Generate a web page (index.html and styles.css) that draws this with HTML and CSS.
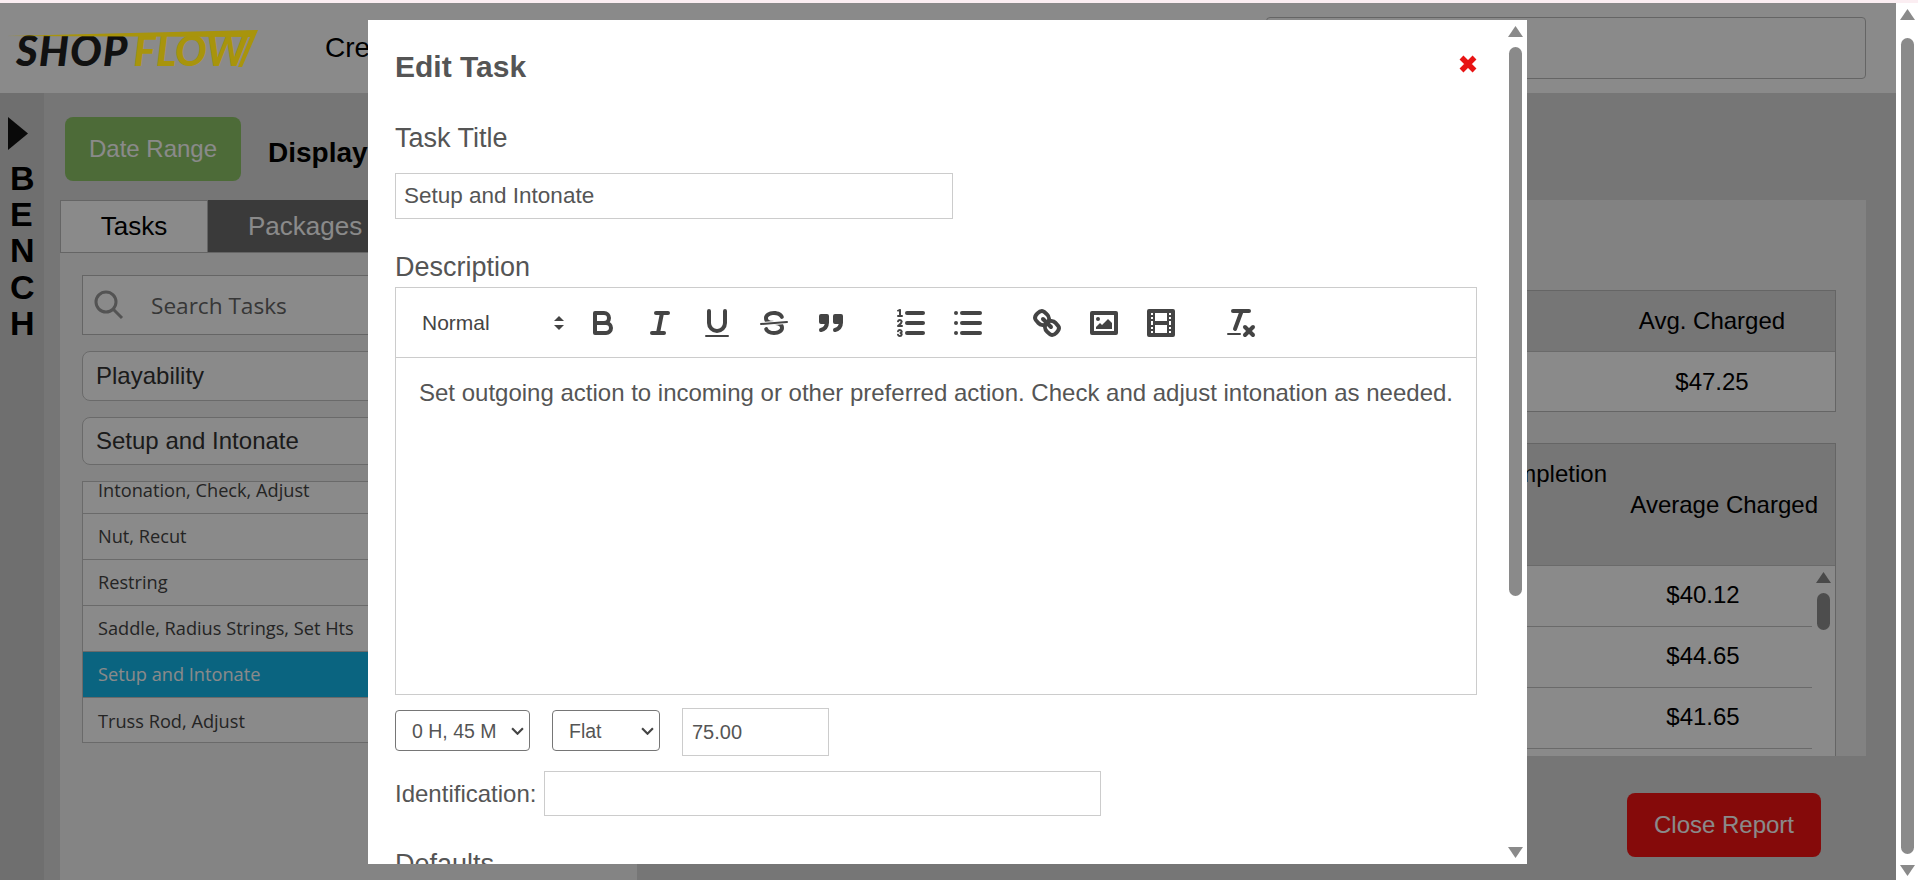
FILE: index.html
```html
<!DOCTYPE html>
<html lang="en">
<head>
<meta charset="utf-8">
<title>Shopflow</title>
<link rel="stylesheet" href="styles.css">
</head>
<body>
<div class="top-strip"></div>
<div class="shell">
  <div class="page">
    <header class="header">
      <div class="logo">
        <svg class="logo-swoosh" viewBox="0 0 260 50" aria-hidden="true"><polygon points="7,16 258,10 242,47 238,47 250,17"/></svg>
        <span class="logo-shop">SHOP</span><span class="logo-flow">FLOW</span>
      </div>
      <div class="header-title">Create Report</div>
      <div class="header-box"></div>
    </header>
    <div class="main">
      <aside class="bench">
        <svg class="bench-arrow" viewBox="0 0 20 33" aria-hidden="true"><polygon points="0,0 20,16.5 0,33"/></svg>
        <div class="bench-letters"><span>B</span><span>E</span><span>N</span><span>C</span><span>H</span></div>
      </aside>
      <div class="content">
        <div class="toolbar-row">
          <button class="date-btn">Date Range</button>
          <div class="display-label">Display</div>
        </div>
        <div class="panels">
          <section class="left-panel">
            <div class="tabs">
              <div class="tab tab-active">Tasks</div>
              <div class="tab tab-dark">Packages</div>
            </div>
            <div class="left-body">
              <div class="search">
                <svg class="search-icon" viewBox="0 0 30 30" aria-hidden="true"><circle cx="12" cy="12" r="10"/><line x1="19.5" y1="19.5" x2="28" y2="28"/></svg>
                <span class="search-text">Search Tasks</span>
              </div>
              <div class="group">Playability</div>
              <div class="group">Setup and Intonate</div>
              <div class="task-list">
                <div class="task task-first">Intonation, Check, Adjust</div>
                <div class="task">Nut, Recut</div>
                <div class="task">Restring</div>
                <div class="task">Saddle, Radius Strings, Set Hts</div>
                <div class="task task-selected">Setup and Intonate</div>
                <div class="task">Truss Rod, Adjust</div>
              </div>
            </div>
          </section>
          <div class="right-col">
            <section class="right-panel">
              <div class="table table-one">
                <div class="thead thead-one"><span class="col-avg">Avg. Charged</span></div>
                <div class="trow trow-one"><span class="col-avg">$47.25</span></div>
              </div>
              <div class="table table-two">
                <div class="thead thead-two">
                  <span class="col-completion">Completion</span>
                  <span class="col-average">Average Charged</span>
                </div>
                <div class="tbody">
                  <div class="rows">
                    <div class="row"><span class="col-money">$40.12</span></div>
                    <div class="row"><span class="col-money">$44.65</span></div>
                    <div class="row"><span class="col-money">$41.65</span></div>
                  </div>
                  <div class="mini-scroll">
                    <svg class="arrow-up" viewBox="0 0 15 11" aria-hidden="true"><polygon points="7.5,0 15,11 0,11"/></svg>
                    <div class="mini-thumb"></div>
                  </div>
                </div>
              </div>
            </section>
            <div class="close-row"><button class="close-btn">Close Report</button></div>
          </div>
        </div>
      </div>
    </div>
    <div class="overlay"></div>
    <div class="modal">
      <div class="modal-body">
        <div class="modal-head">
          <h2 class="modal-title">Edit Task</h2>
          <svg class="modal-x" viewBox="0 0 18 18" aria-hidden="true"><path d="M2.5 2.5 15.500 15.500M15.500 2.500 2.500 15.500"/></svg>
        </div>
        <label class="field-label">Task Title</label>
        <input class="text-input title-input" type="text" value="Setup and Intonate">
        <label class="field-label desc-label">Description</label>
        <div class="editor">
          <div class="ql-toolbar">
            <div class="picker"><span>Normal</span>
              <svg class="picker-arrows" viewBox="0 0 10 14" aria-hidden="true"><polygon points="5,0 10,5 0,5"/><polygon points="5,14 10,9 0,9"/></svg>
            </div>
            <div class="ql-group">
              <span class="ql-btn"><svg viewBox="0 0 18 18"><path class="s" d="M5,4H9.5A2.5,2.5,0,0,1,12,6.5v0A2.5,2.5,0,0,1,9.5,9H5A0,0,0,0,1,5,9V4A0,0,0,0,1,5,4Z"/><path class="s" d="M5,9h5.5A2.5,2.5,0,0,1,13,11.5v0A2.5,2.5,0,0,1,10.5,14H5a0,0,0,0,1,0,0V9A0,0,0,0,1,5,9Z"/></svg></span>
              <span class="ql-btn"><svg viewBox="0 0 18 18"><line class="s" x1="7" x2="13" y1="4" y2="4"/><line class="s" x1="5" x2="11" y1="14" y2="14"/><line class="s" x1="8" x2="10" y1="14" y2="4"/></svg></span>
              <span class="ql-btn"><svg viewBox="0 0 18 18"><path class="s" d="M5,3V9a4.012,4.012,0,0,0,4,4H9a4.012,4.012,0,0,0,4-4V3"/><rect class="f" height="1" rx="0.5" ry="0.5" width="12" x="3" y="15"/></svg></span>
              <span class="ql-btn"><svg viewBox="0 0 18 18"><line class="s thin" x1="15.5" x2="2.5" y1="8.5" y2="9.5"/><path class="f" d="M9.007,8C6.542,7.791,6,7.519,6,6.5,6,5.792,7.283,5,9,5c1.571,0,2.765.679,2.969,1.309a1,1,0,0,0,1.9-.617C13.356,4.106,11.354,3,9,3,6.2,3,4,4.538,4,6.5a3.2,3.2,0,0,0,.5,1.843Z"/><path class="f" d="M8.984,10C11.457,10.208,12,10.479,12,11.5c0,.708-1.283,1.5-3,1.5-1.571,0-2.765-.679-2.969-1.309a1,1,0,0,0-1.9.617C4.644,13.894,6.646,15,9,15c2.8,0,5-1.538,5-3.5a3.2,3.2,0,0,0-.5-1.843Z"/></svg></span>
              <span class="ql-btn"><svg viewBox="0 0 18 18"><rect class="f s" height="3" width="3" x="4" y="5.5"/><rect class="f s" height="3" width="3" x="11" y="5.5"/><path class="s" d="M7,8.500c0,2-1,3.500-3,4"/><path class="s" d="M14,8.500c0,2-1,3.500-3,4"/></svg></span>
            </div>
            <div class="ql-group ql-group-lists">
              <span class="ql-btn"><svg viewBox="0 0 18 18"><line class="s" x1="7" x2="15" y1="4" y2="4"/><line class="s" x1="7" x2="15" y1="9" y2="9"/><line class="s" x1="7" x2="15" y1="14" y2="14"/><line class="s thin" x1="2.5" x2="4.5" y1="5.5" y2="5.5"/><path class="f" d="M3.5,6A0.5,0.5,0,0,1,3,5.5V3.085l-0.276.138A0.5,0.5,0,0,1,2.053,3c-0.124-.247-0.023-0.324.224-0.447l1-.5A0.5,0.5,0,0,1,4,2.5v3A0.5,0.5,0,0,1,3.5,6Z"/><path class="s thin" d="M4.5,10.5h-2c0-.234,1.85-1.076,1.85-2.234A0.959,0.959,0,0,0,2.5,8.156"/><path class="s thin" d="M2.5,14.846a0.959,0.959,0,0,0,1.85-.109A0.7,0.7,0,0,0,3.75,14a0.688,0.688,0,0,0,.6-0.736,0.959,0.959,0,0,0-1.85-.109"/></svg></span>
              <span class="ql-btn"><svg viewBox="0 0 18 18"><line class="s" x1="6" x2="15" y1="4" y2="4"/><line class="s" x1="6" x2="15" y1="9" y2="9"/><line class="s" x1="6" x2="15" y1="14" y2="14"/><line class="s" x1="3" x2="3" y1="4" y2="4"/><line class="s" x1="3" x2="3" y1="9" y2="9"/><line class="s" x1="3" x2="3" y1="14" y2="14"/></svg></span>
            </div>
            <div class="ql-group">
              <span class="ql-btn"><svg viewBox="0 0 18 18"><line class="s" x1="7" x2="11" y1="7" y2="11"/><path class="s" d="M8.9,4.577a3.476,3.476,0,0,1,.36,4.679A3.476,3.476,0,0,1,4.577,8.9C3.185,7.5,2.035,6.4,4.217,4.217S7.5,3.185,8.9,4.577Z"/><path class="s" d="M13.423,9.1a3.476,3.476,0,0,0-4.679-.36,3.476,3.476,0,0,0,.36,4.679c1.392,1.392,2.5,2.542,4.679.36S14.815,10.5,13.423,9.1Z"/></svg></span>
              <span class="ql-btn"><svg viewBox="0 0 18 18"><rect class="s" height="10" width="12" x="3" y="4"/><circle class="f" cx="6" cy="7" r="1"/><polyline class="f" points="5 12 5 11 7 9 8 10 11 7 13 9 13 12 5 12"/></svg></span>
              <span class="ql-btn"><svg viewBox="0 0 18 18"><rect class="s" height="12" width="12" x="3" y="3"/><rect class="f" height="12" width="1" x="5" y="3"/><rect class="f" height="12" width="1" x="12" y="3"/><rect class="f" height="2" width="8" x="5" y="8"/><rect class="f" height="1" width="3" x="3" y="5"/><rect class="f" height="1" width="3" x="3" y="7"/><rect class="f" height="1" width="3" x="3" y="10"/><rect class="f" height="1" width="3" x="3" y="12"/><rect class="f" height="1" width="3" x="12" y="5"/><rect class="f" height="1" width="3" x="12" y="7"/><rect class="f" height="1" width="3" x="12" y="10"/><rect class="f" height="1" width="3" x="12" y="12"/></svg></span>
            </div>
            <div class="ql-group">
              <span class="ql-btn"><svg viewBox="0 0 18 18"><line class="s" x1="5" x2="13" y1="3" y2="3"/><line class="s" x1="6" x2="9.35" y1="12" y2="3"/><line class="s" x1="11" x2="15" y1="11" y2="15"/><line class="s" x1="15" x2="11" y1="11" y2="15"/><rect class="f" height="1" rx="0.5" ry="0.5" width="7" x="2" y="14"/></svg></span>
            </div>
          </div>
          <div class="ql-editor">Set outgoing action to incoming or other preferred action. Check and adjust intonation as needed.</div>
        </div>
        <div class="options">
          <div class="sel-wrap sel-time">
            <select class="sel"><option>0 H, 45 M</option></select>
            <svg class="chevron" viewBox="0 0 12 7" aria-hidden="true"><path d="M1 1 6 6 11 1"/></svg>
          </div>
          <div class="sel-wrap sel-rate">
            <select class="sel"><option>Flat</option></select>
            <svg class="chevron" viewBox="0 0 12 7" aria-hidden="true"><path d="M1 1 6 6 11 1"/></svg>
          </div>
          <input class="text-input price-input" type="text" value="75.00">
        </div>
        <div class="ident">
          <label class="ident-label">Identification:</label>
          <input class="text-input ident-input" type="text">
        </div>
        <label class="field-label defaults-label">Defaults</label>
      </div>
      <div class="scrollbar modal-scroll">
        <svg class="arrow-up" viewBox="0 0 15 11" aria-hidden="true"><polygon points="7.5,0 15,11 0,11"/></svg>
        <div class="thumb modal-thumb"></div>
        <svg class="arrow-down" viewBox="0 0 15 11" aria-hidden="true"><polygon points="0,0 15,0 7.5,11"/></svg>
      </div>
    </div>
  </div>
  <div class="scrollbar page-scroll">
    <svg class="arrow-up" viewBox="0 0 15 11" aria-hidden="true"><polygon points="7.5,0 15,11 0,11"/></svg>
    <div class="thumb page-thumb"></div>
    <svg class="arrow-down" viewBox="0 0 15 11" aria-hidden="true"><polygon points="0,0 15,0 7.5,11"/></svg>
  </div>
</div>
</body>
</html>
```
FILE: styles.css
```css
* { box-sizing: border-box; }
html, body { margin: 0; height: 100%; overflow: hidden; }
body {
  font-family: "Liberation Sans", Arial, sans-serif;
  color: #000;
  background: #fff;
  display: flex;
  flex-direction: column;
}
.top-strip { height: 3px; background: #fbeef2; flex: none; }
.shell { flex: 1; display: flex; min-height: 0; }
.page { position: relative; flex: 1; min-width: 0; display: flex; flex-direction: column; overflow: hidden; background: #dadada; }

/* header */
.header { height: 90px; flex: none; background: #fff; display: flex; align-items: center; position: relative; }
.logo { position: relative; z-index: 2; width: 325px; height: 42px; margin-top: 4px; padding-left: 16px; font-family: Lato, "Liberation Sans", sans-serif; font-weight: 900; font-style: italic; font-size: 42px; letter-spacing: 1px; line-height: 42px; white-space: nowrap; }
.logo-shop { color: #111; }
.logo-flow { color: #a8940c; margin-left: 5px; letter-spacing: 0; }
.logo-swoosh { position: absolute; left: 0; top: -9px; width: 260px; height: 50px; fill: #a8940c; }
.header-title { font-size: 28px; flex: 1; }
.header-box { width: 600px; height: 62px; margin-right: 30px; border: 1px solid #bbb; border-radius: 4px; }

/* bench */
.main { flex: 1; display: flex; min-height: 0; }
.bench { width: 44px; flex: none; background: #cdcdcd; padding: 24px 0 0 8px; }
.bench-arrow { display: block; width: 20px; height: 33px; fill: #111; }
.bench-letters { display: flex; flex-direction: column; font-size: 34px; font-weight: 700; line-height: 36.2px; margin-top: 10px; padding-left: 2px; }

/* content */
.content { flex: 1; min-width: 0; display: flex; flex-direction: column; padding: 24px 30px 0 16px; }
.toolbar-row { height: 83px; flex: none; display: flex; padding-left: 5px; }
.date-btn { width: 176px; height: 64px; border: 0; border-radius: 8px; background: #8ec668; color: #fff; font: 24px "Liberation Sans", sans-serif; }
.display-label { font-size: 28px; font-weight: 700; margin-left: 27px; margin-top: 20px; }
.panels { flex: 1; display: flex; min-height: 0; }

.left-panel { width: 577px; flex: none; background: #f4f4f4; }
.tabs { display: flex; height: 53px; border-bottom: 1px solid #bbb; }
.tab { font-size: 26px; display: flex; align-items: center; }
.tab-active { width: 148px; justify-content: center; background: #fff; border: 1px solid #bbb; border-bottom: 0; }
.tab-dark { width: 200px; padding-left: 40px; background: #6b6b6b; color: #fff; }
.left-body { padding: 22px 0 0 22px; }
.search { height: 60px; border: 1px solid #bbb; background: #fff; display: flex; align-items: center; padding-left: 11px; }
.search-icon { width: 30px; height: 30px; fill: none; stroke: #999; stroke-width: 3; }
.search-text { font-family: "Open Sans", sans-serif; font-size: 22.6px; color: #666; margin-left: 27px; }
.group { height: 50px; margin-top: 16px; border: 1px solid #c4c4c4; border-radius: 8px; background: #fff; font-size: 24px; color: #333; display: flex; align-items: center; padding-left: 13px; }
.group + .group { margin-top: 16px; height: 48px; }
.task-list { margin-top: 16px; height: 262px; overflow: hidden; border: 1px solid #c4c4c4; background: #fff; }
.task { height: 46px; border-bottom: 1px solid #c4c4c4; font-family: "Open Sans", sans-serif; font-size: 18.2px; color: #444; display: flex; align-items: center; padding-left: 15px; }
.task-first { margin-top: -14.5px; }
.task-selected { background: #14b9ed; color: #fff; }
.task:last-child { border-bottom: 0; }

.right-col { flex: 1; min-width: 0; display: flex; flex-direction: column; }
.right-panel { height: 556px; flex: none; background: #f1f1f1; padding: 90px 30px 0 60px; overflow: hidden; }
.table { border: 1px solid #bbb; background: #fff; }
.thead { background: #dadada; border-bottom: 1px solid #c4c4c4; font-size: 24px; }
.thead-one { height: 61px; display: flex; align-items: center; }
.trow-one { height: 59px; display: flex; align-items: center; font-size: 24px; }
.col-avg { margin-left: auto; width: 246px; text-align: center; }
.table-two { margin-top: 31px; border-bottom: 0; }
.thead-two { height: 122px; display: flex; }
.col-completion { margin-left: auto; padding-top: 15px; line-height: 30px; }
.col-average { width: 228px; text-align: right; padding-right: 17px; line-height: 121px; }
.tbody { display: flex; background: #fff; font-size: 24px; height: 210px; overflow: hidden; }
.rows { flex: 1; }
.row { height: 61px; padding-bottom: 3px; border-bottom: 1px solid #c4c4c4; display: flex; align-items: center; }
.col-money { margin-left: auto; width: 218px; text-align: center; }
.mini-scroll { width: 23px; padding: 6px 0 0 4px; }
.mini-scroll .arrow-up { display: block; fill: #888; }
.mini-thumb { width: 13px; height: 37px; background: #8f8f8f; border-radius: 7px; margin: 10px 0 0 1px; }
.close-row { flex: 1; display: flex; justify-content: flex-end; padding: 37px 45px 0 0; }
.close-btn { width: 194px; height: 64px; border: 0; border-radius: 8px; background: #f61414; color: #fff; font: 24px "Liberation Sans", sans-serif; }

/* overlay + modal */
.overlay { position: absolute; inset: 0; background: rgba(0, 0, 0, 0.46); z-index: 1; }
.modal { position: absolute; left: 368px; top: 17px; width: 1159px; height: 844px; background: #fff; z-index: 3; display: flex; overflow: hidden; color: #555; }
.modal-body { flex: 1; min-width: 0; padding: 0 27px; overflow: hidden; }
.modal-head { display: flex; justify-content: space-between; align-items: flex-start; height: 102px; padding-top: 31px; }
.modal-title { margin: 0; font-size: 30px; font-weight: 700; line-height: 32px; }
.modal-x { width: 18px; height: 18px; margin-top: 4px; stroke: #e81414; stroke-width: 5.5; }
.field-label { display: block; font-size: 27px; line-height: 32px; }
.text-input { border: 1px solid #ccc; background: #fff; color: #555; font: 22.5px "Liberation Sans", sans-serif; outline: 0; }
.title-input { display: block; width: 558px; height: 46px; margin-top: 19px; padding: 0 8px; }
.desc-label { margin-top: 32px; }
.editor { border: 1px solid #ccc; margin-top: 4px; width: 1082px; }
.ql-toolbar { height: 70px; border-bottom: 1px solid #ccc; display: flex; align-items: center; padding-left: 26px; }
.picker { width: 152px; display: flex; justify-content: space-between; align-items: center; font-size: 21px; color: #444; padding-right: 10px; }
.picker-arrows { width: 10px; height: 14px; fill: #444; }
.ql-group { display: flex; margin-right: 23px; }
.ql-group-lists { margin-right: 22px; }
.ql-btn { width: 57px; display: flex; justify-content: center; }
.ql-btn svg { width: 36px; height: 36px; }
.s { fill: none; stroke: #444; stroke-width: 2; stroke-linecap: round; stroke-linejoin: round; }
.s.thin { stroke-width: 1; }
.f { fill: #444; }
.f.s { fill: #444; }
.ql-editor { height: 336px; padding: 20px 23px; font-size: 24px; line-height: 30px; color: #555; white-space: nowrap; }
.options { display: flex; align-items: center; margin-top: 13px; }
.sel-wrap { position: relative; height: 41px; margin-bottom: 3px; }
.sel { appearance: none; display: block; width: 100%; height: 100%; border: 1px solid #767676; border-radius: 4px; background: #fff; color: #555; font: 19.5px "Liberation Sans", sans-serif; padding-left: 16px; }
.chevron { position: absolute; right: 6px; top: 17px; width: 13px; height: 8px; fill: none; stroke: #444; stroke-width: 2; pointer-events: none; }
.sel-time { width: 135px; }
.sel-rate { width: 108px; margin-left: 22px; }
.price-input { width: 147px; height: 48px; margin-left: 22px; padding: 0 9px; font-size: 20px; }
.ident { display: flex; align-items: center; margin-top: 15px; }
.ident-label { font-size: 24px; color: #555; }
.ident-input { width: 557px; height: 45px; margin-left: 8px; }
.defaults-label { margin-top: 32px; }

/* scrollbars */
.scrollbar { flex: none; display: flex; flex-direction: column; align-items: center; background: #fff; }
.scrollbar svg { width: 15px; height: 11px; fill: #8a8a8a; flex: none; }
.arrow-up, .arrow-down { display: block; width: 15px; height: 11px; }
.thumb { width: 13px; border-radius: 7px; background: #8a8a8a; }
.page-scroll { width: 22px; padding-top: 6px; }
.page-thumb { height: 816px; margin: 18px 0 11px; }
.modal-scroll { width: 23px; padding: 6px 1px 0 0; }
.modal-thumb { height: 549px; margin: 10px 0 251px; }
```
